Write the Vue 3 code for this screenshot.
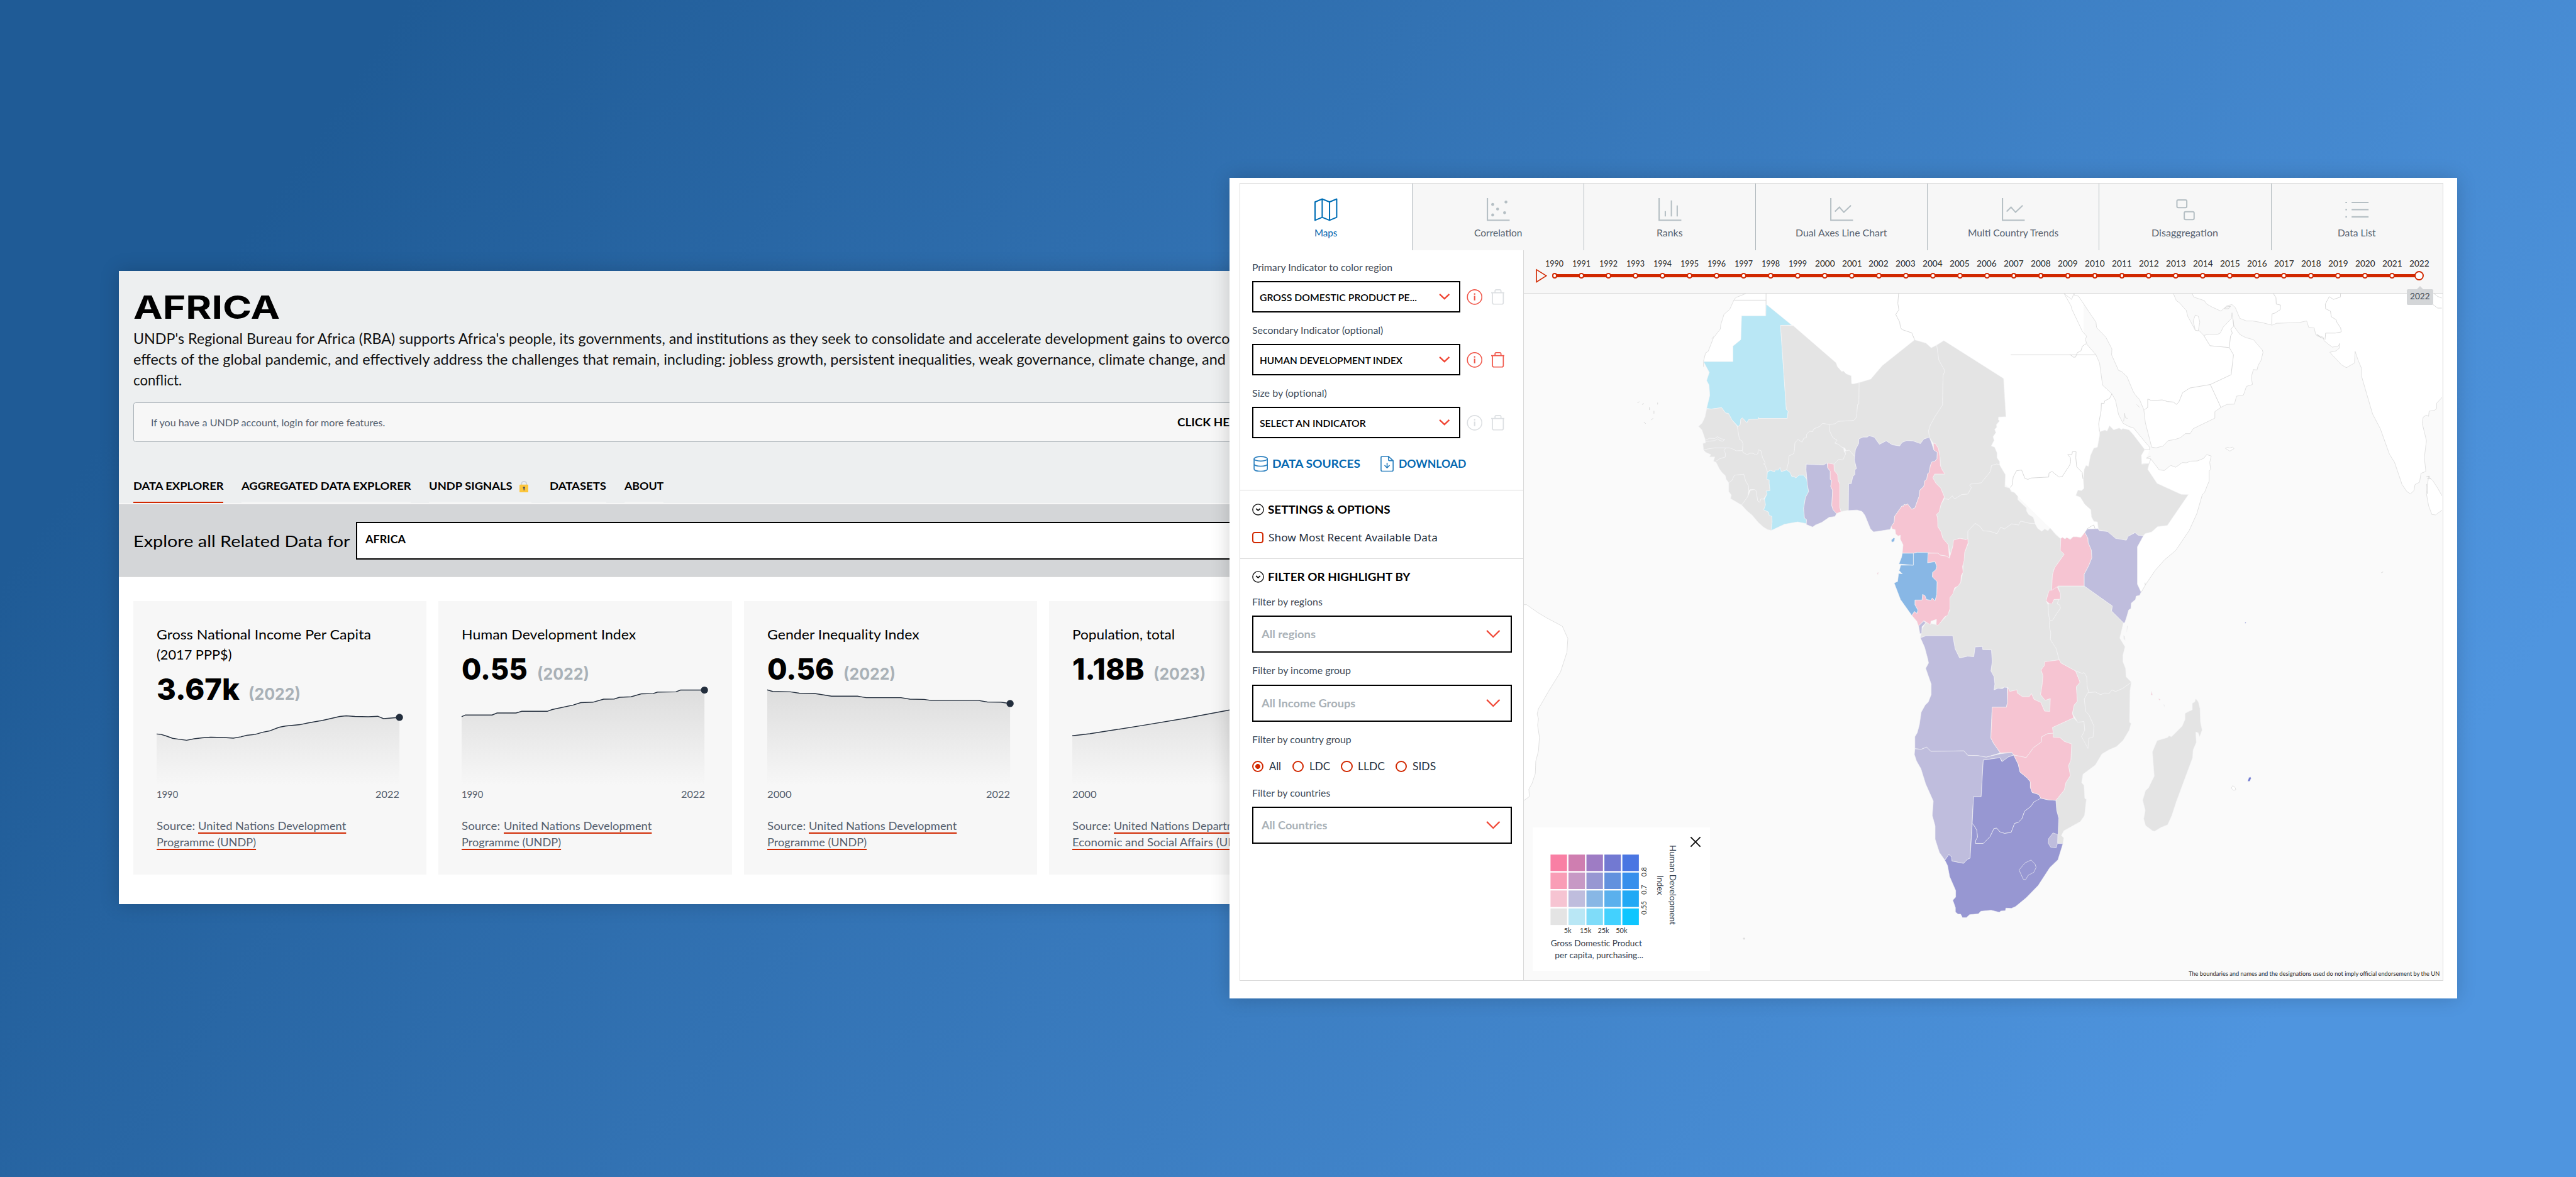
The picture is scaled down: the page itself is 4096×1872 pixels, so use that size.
<script setup>
// Width-fitting directive: scales a line of text horizontally to a given width
// and keeps the fitted width as its footprint in the layout.
const vFit = {
  mounted(el, { value }) {
    if (!value) return
    const scale = el.closest('.stage').getBoundingClientRect().width / 5622
    const natural = el.getBoundingClientRect().width / scale
    el.style.transform = `scaleX(${(value / natural).toFixed(4)})`
    el.style.marginRight = `${(value - natural).toFixed(2)}px`
  },
}

const navTabs = [
  { label: 'DATA EXPLORER', w: 197, active: true },
  { label: 'AGGREGATED DATA EXPLORER', w: 370 },
  { label: 'UNDP SIGNALS', w: 182, lock: true },
  { label: 'DATASETS', w: 123.5 },
  { label: 'ABOUT', w: 85.5 },
]

const undp = [['United Nations Development', 323], ['Programme (UNDP)', 217]]
const cards = [
  {
    title: [['Gross National Income Per Capita', 468], ['(2017 PPP$)', 164]],
    value: ['3.67k', 181], year: '(2022)', from: ['1990', 47], to: '2022', source: undp, span: [123, 762],
    pts: [[123, 728], [135, 730], [148, 737], [165, 748], [180, 752], [202, 757], [222, 750], [243, 746], [265, 743], [300, 744], [325, 747], [345, 741], [360, 734], [382, 730], [402, 720], [420, 714], [445, 697], [462, 691], [500, 685], [522, 677], [560, 665], [605, 647], [622, 644], [645, 647], [680, 648], [705, 646], [720, 657], [762, 651]],
  },
  {
    title: [['Human Development Index', 380.5]],
    value: ['0.55', 144], year: '(2022)', from: ['1990', 47], to: '2022', source: undp, span: [927, 1565],
    pts: [[927, 648], [937, 640], [1007, 640], [1020, 631], [1070, 631], [1085, 623], [1152, 623], [1165, 615], [1220, 594], [1240, 583], [1272, 581], [1300, 567], [1328, 566], [1342, 558], [1372, 556], [1400, 542], [1430, 541], [1442, 534], [1490, 533], [1502, 525], [1565, 525]],
  },
  {
    title: [['Gender Inequality Index', 332]],
    value: ['0.56', 146], year: '(2022)', from: ['2000', 53], to: '2022', source: undp, span: [225, 906],
    pts: [[225, 524], [240, 531], [290, 533], [315, 539], [355, 540], [405, 553], [478, 553], [502, 560], [600, 560], [625, 567], [665, 568], [685, 573], [818, 573], [842, 580], [880, 581], [906, 587]],
  },
  {
    title: [['Population, total', 224]],
    value: ['1.18B', 157], year: '(2023)', from: ['2000', 53], to: '2023',
    source: [['United Nations Departm', 267], ['Economic and Social Affairs (UN', 359]], span: [1081, 1762],
    pts: [[1081, 736], [1130, 727], [1200, 709], [1280, 688], [1400, 655], [1522, 617], [1762, 548]],
  },
].map((c) => {
  const line = c.pts.map(([x, y]) => [
    (((x - c.span[0]) / (c.span[1] - c.span[0])) * 530).toFixed(1),
    (200 + (y - 967) * 0.4719).toFixed(1),
  ])
  return { ...c, line: line.map((p) => p.join(',')).join(' '), end: line[line.length - 1] }
})

const views = [
  { label: 'Maps', w: 50, icon: 'map', active: true },
  { label: 'Correlation', w: 105, icon: 'scatter' },
  { label: 'Ranks', w: 57, icon: 'bars' },
  { label: 'Dual Axes Line Chart', w: 199.5, icon: 'line' },
  { label: 'Multi Country Trends', w: 198, icon: 'line' },
  { label: 'Disaggregation', w: 145.5, icon: 'boxes' },
  { label: 'Data List', w: 83, icon: 'list' },
]

const indicators = [
  { label: 'Primary Indicator to color region', lw: 306, text: 'GROSS DOMESTIC PRODUCT PE...', tw: 343, info: true, trash: false },
  { label: 'Secondary Indicator (optional)', lw: 286, text: 'HUMAN DEVELOPMENT INDEX', tw: 311.5, info: true, trash: true },
  { label: 'Size by (optional)', lw: 163, text: 'SELECT AN INDICATOR', tw: 231.5, info: false, trash: false },
]

const radios = [
  { label: 'All', w: 26, pad: 25 },
  { label: 'LDC', w: 45.5, pad: 24 },
  { label: 'LLDC', w: 59, pad: 23 },
  { label: 'SIDS', w: 51, pad: 0 },
]

const years = Array.from({ length: 33 }, (_, i) => 1990 + i)

const legend = [
  ['#f97fa4', '#cf7eb0', '#9e7cc4', '#7279d2', '#4a76e2'],
  ['#f99db6', '#c799c5', '#9797d2', '#6291de', '#378fec'],
  ['#f6c4d2', '#bfbddd', '#88b7e5', '#5ab0ed', '#21a9f5'],
  ['#e4e4e4', '#b9e7f5', '#7fdcf9', '#43d1fe', '#0ec6ff'],
]
const G = '#e4e4e4', P = '#f6c4d2', L = '#bfbddd', B = '#88b7e5', C = '#b9e7f5', V = '#9797d2'

const west = [
  [C, '360,88 458,178 415,179 437,538 444,547 441,577 332,577 331,572 330,580 294,582 287,596 270,575 264,580 262,603 254,612 230,583 217,556 206,554 191,531 152,537 134,534 146,478 143,434 134,415 144,380 122,334 234,334 234,268 264,240 267,138 359,138'],
  [G, '415,179 463,180 626,339 631,355 647,376 655,375 664,386 684,395 685,428 690,430 714,424 713,516 708,518 704,572 693,586 634,590 622,600 601,604 575,598 565,611 540,623 538,634 526,632 515,643 513,660 504,662 497,679 481,667 470,682 468,714 465,728 447,738 445,767 438,798 418,805 413,787 407,798 395,798 392,806 376,799 365,806 356,775 350,772 357,768 346,744 341,716 330,711 329,728 319,734 313,727 299,726 288,733 272,722 270,715 272,685 267,672 259,668 250,612 254,612 262,603 264,580 270,575 287,596 294,582 330,580 332,577 441,577 444,547 437,538'],
  [G, '925,241 968,255 988,275 1009,263 1017,327 1040,374 1033,394 1031,520 1002,570 985,605 978,630 981,658 960,665 947,685 918,673 895,672 877,680 868,695 840,690 817,673 791,688 772,658 752,651 745,657 728,657 713,665 712,685 700,710 697,740 676,713 664,716 660,704 648,700 635,688 621,683 630,670 614,660 602,632 600,604 622,600 634,590 693,586 704,572 708,518 713,516 714,424 758,409 802,351'],
  [G, '1036,244 1263,406 1272,570 1244,571 1243,583 1248,588 1236,603 1237,615 1229,624 1234,638 1223,655 1227,671 1216,695 1229,700 1238,724 1238,745 1248,762 1248,776 1237,772 1217,779 1214,803 1178,853 1138,858 1134,863 1141,873 1127,901 1104,903 1077,922 1068,909 1055,924 1037,921 1038,913 1024,875 1006,855 994,831 1001,815 1040,815 1030,798 1023,780 1021,740 1015,705 1003,684 996,684 981,658 978,630 985,605 1002,570 1031,520 1033,394 1040,374 1017,327 1009,263'],
  [G, '134,537 152,537 191,531 206,554 217,556 230,583 250,610 259,668 267,672 272,685 270,715 246,716 236,709 222,709 220,703 166,703 122,711 120,684 130,682 128,665 116,626 103,611 117,597 128,570'],
  [G, '122,711 166,703 220,703 236,709 246,716 270,715 272,722 288,733 299,726 313,727 319,734 329,728 330,711 341,716 346,744 357,768 350,772 356,775 365,806 363,838 372,840 372,855 375,886 360,888 364,900 350,923 341,921 336,936 328,930 322,887 315,881 300,881 294,887 293,866 282,844 275,816 240,820 230,843 218,852 208,837 205,822 192,808 182,792 170,765 160,760 165,742 145,742 150,732 130,722'],
  [G, '218,852 230,843 240,820 275,816 282,844 293,866 294,887 290,913 267,948 240,930 225,920 228,905 218,890'],
  [G, '267,948 290,913 300,885 315,881 322,887 328,930 336,936 341,921 350,923 354,923 358,947 351,968 370,978 372,992 382,996 383,1020 379,1057 365,1052 350,1042 330,1022 308,992 287,972'],
  [G, '438,798 445,767 447,738 465,728 468,714 470,682 481,667 497,679 504,662 513,660 515,643 526,632 538,634 540,623 565,611 575,598 601,604 602,632 614,660 630,670 621,683 635,688 648,700 655,705 657,720 663,728 652,755 636,752 618,775 594,768 590,772 578,776 513,773 512,795 515,838 503,820 485,820 473,832 465,825 459,828 450,807'],
  [C, '365,808 376,799 392,806 395,798 407,798 413,787 418,805 438,798 450,807 459,828 465,825 473,832 485,820 503,820 515,838 517,860 522,890 510,915 503,962 506,1003 514,1010 515,1028 480,1020 430,1030 379,1057 383,1020 382,996 372,992 370,978 351,968 358,947 354,923 364,900 360,888 375,886 372,855 372,840 363,838'],
  [L, '513,773 578,776 592,768 594,788 604,803 604,838 610,842 606,868 613,885 610,950 615,968 628,984 622,997 600,1000 572,1022 548,1033 537,1042 513,1031 514,1010 506,1003 503,962 510,915 522,890 517,860 512,795'],
  [G, '618,773 636,752 652,755 663,728 660,718 676,713 697,740 696,755 704,792 698,796 698,817 690,826 684,856 674,857 673,970 645,976 640,958 640,858 634,842 632,818 619,800'],
  [P, '594,768 618,773 619,800 632,818 634,842 640,858 640,958 645,976 628,984 615,968 610,950 613,885 606,868 610,842 604,838 604,803 594,788'],
  [L, '713,665 728,657 745,657 752,651 772,658 791,688 817,673 840,690 868,695 877,680 895,672 918,673 947,685 960,665 981,658 990,684 998,712 1011,722 1010,750 1000,762 991,763 985,778 980,808 974,815 971,838 963,845 960,868 945,884 942,910 926,960 914,966 897,942 893,948 885,945 882,954 877,951 849,996 847,1022 836,1040 832,1052 769,1063 757,1050 736,992 725,975 706,969 673,971 674,857 684,856 690,826 698,817 698,796 704,792 696,755 697,740 700,710 712,685'],
  [G, '1038,921 1055,924 1068,909 1077,922 1104,903 1127,901 1141,873 1134,863 1138,858 1178,853 1214,803 1217,779 1237,772 1248,776 1270,818 1268,870 1286,875 1292,890 1304,894 1317,910 1317,925 1350,960 1350,972 1358,988 1376,1000 1383,1027 1360,1025 1328,1016 1320,1033 1294,1028 1266,1050 1252,1042 1238,1070 1212,1060 1186,1058 1172,1038 1155,1026 1127,1060 1127,1096 1097,1090 1073,1098 1070,1125 1060,1160 1053,1118 1032,1090 1025,1062 1013,1040 1012,1003 1008,988 1018,978 1025,945'],
  [P, '996,684 1003,684 1015,705 1021,740 1023,780 1030,798 1040,815 1001,815 994,831 1006,855 1024,875 1038,913 1025,945 1018,978 1008,988 1012,1003 1013,1040 1025,1062 1032,1090 1053,1118 1057,1175 1045,1166 1022,1162 1014,1154 935,1150 920,1154 878,1153 881,1118 870,1093 871,1077 862,1080 853,1072 851,1053 840,1050 836,1040 847,1022 849,996 877,951 882,954 885,945 893,948 897,942 914,966 926,960 942,910 945,884 960,868 963,845 971,838 974,815 980,808 985,778 991,763 1000,762 1010,750 1011,722 998,712'],
  [P, '976,1154 1014,1154 1022,1162 1045,1166 1057,1175 1070,1125 1073,1098 1097,1090 1120,1096 1127,1092 1128,1110 1115,1150 1113,1185 1107,1210 1109,1235 1102,1250 1100,1278 1090,1294 1077,1302 1070,1328 1059,1344 1059,1392 1050,1420 1040,1425 1014,1463 1007,1460 1008,1437 987,1445 985,1460 968,1448 960,1443 940,1466 933,1445 914,1420 924,1403 934,1411 937,1397 926,1375 926,1354 953,1354 955,1330 964,1335 970,1352 987,1355 992,1345 1002,1358 1009,1330 1010,1275 992,1255 993,1236 1005,1225 1009,1210 1002,1190 974,1195'],
  [B, '920,1154 935,1150 976,1151 974,1195 1002,1190 1009,1210 1005,1225 993,1236 992,1255 1010,1275 1009,1330 1002,1358 992,1345 987,1355 970,1352 964,1335 955,1330 953,1354 926,1354 926,1375 937,1397 934,1411 924,1403 914,1420 871,1352 847,1281 860,1275 864,1240 878,1242 866,1228 872,1205 920,1205'],
  [B, '878,1154 920,1154 920,1205 865,1200 875,1172'],
  [B, '838,1107 836,1098 845,1088 850,1090 847,1104'],
  [P, '782,1238 788,1235 785,1247'],
]

const south = [
  [G, '430,50 430,18 458,-11 475,-1 489,17 515,19 541,28 555,3 569,10 597,-9 623,-5 631,-20 663,-12 686,-10 696,8 711,19 723,10 735,17 743,6 765,32 784,48 784,92 797,106 760,158 752,185 749,243 735,258 728,283 736,300 737,332 742,358 740,380 746,405 744,430 766,465 778,508 723,515 721,530 709,546 716,568 713,602 707,640 724,662 744,655 742,704 722,703 708,670 682,658 672,636 664,648 638,648 618,634 617,622 590,628 582,612 555,615 530,620 533,600 530,572 518,550 523,515 520,470 487,469 486,457 458,459 453,496 430,494 399,501 382,466 373,416 272,416 250,423 256,390 270,367 290,370 318,375 345,345 362,320 362,272 382,237 403,215 411,175 413,140 418,100 432,65'],
  [L, '243,379 263,360 270,367 256,382 255,408 248,408'],
  [L, '250,424 272,416 373,416 382,466 399,501 430,494 453,496 458,459 486,457 487,469 520,470 523,515 518,550 530,572 533,600 530,622 545,616 562,617 570,612 580,613 581,670 577,688 523,688 518,805 528,825 554,862 500,878 482,875 468,872 430,871 415,854 290,856 274,840 253,848 229,846 229,800 238,785 246,755 253,707 268,680 280,668 291,640 291,600 270,540 281,520 278,505 266,460'],
  [L, '229,846 253,848 274,840 290,856 415,854 430,871 468,872 500,878 554,865 598,860 605,870 585,877 562,895 552,880 489,889 481,1028 452,1028 439,1262 428,1267 414,1282 370,1273 369,1258 358,1248 343,1270 322,1240 306,1190 306,1140 295,1100 299,1045 270,980 252,922 235,892 227,868'],
  [V, '489,889 552,880 560,895 585,877 605,870 622,905 629,935 656,957 668,972 668,993 675,1012 700,1020 708,1034 700,1044 682,1048 670,1065 646,1084 636,1112 622,1126 608,1130 595,1164 570,1168 552,1162 540,1148 530,1149 515,1180 489,1206 459,1206 460,1195 467,1182 464,1155 455,1140 447,1130 452,1028 481,1028'],
  [G, '752,765 833,728 848,745 872,742 875,775 863,800 887,832 890,806 906,802 910,760 891,718 878,703 873,657 886,633 915,630 935,640 950,634 968,635 978,622 992,628 1018,617 1052,593 1047,625 1045,745 1051,750 1044,775 1020,815 995,838 967,850 940,866 915,908 868,943 863,975 872,985 875,1035 881,1038 874,1100 858,1123 795,1158 786,1176 795,1185 792,1207 771,1206 776,1110 768,1080 765,1042 797,1003 803,975 820,948 813,910 822,890 825,828 797,818 780,803 755,802'],
  [V, '447,1130 455,1140 464,1155 467,1182 460,1195 459,1206 489,1206 515,1180 530,1149 540,1148 552,1162 570,1168 595,1164 608,1130 622,1126 636,1112 646,1084 670,1065 682,1048 708,1034 735,1040 765,1042 768,1080 776,1110 772,1206 792,1207 773,1268 742,1298 698,1366 652,1413 612,1446 596,1453 575,1452 573,1462 556,1463 550,1468 519,1460 480,1464 470,1474 437,1477 425,1488 410,1488 403,1475 393,1475 383,1467 383,1450 373,1422 384,1410 384,1385 361,1332 353,1290 343,1270 358,1248 369,1258 370,1273 414,1282 428,1267 439,1262'],
  [V, '671,1269 648,1280 625,1307 641,1342 650,1344 660,1327 681,1316 690,1297 686,1285'],
  [L, '754,1166 772,1172 771,1206 766,1223 745,1220 736,1205 738,1187'],
  [P, '778,508 785,520 800,528 840,550 857,593 843,610 847,665 835,680 828,712 833,728 752,765 755,787 735,788 712,800 710,820 680,842 652,880 640,877 605,870 598,860 554,862 528,825 518,805 523,688 577,688 581,670 582,612 590,628 617,622 618,634 638,648 664,648 672,636 682,658 708,670 722,703 742,704 744,655 724,662 707,640 713,602 716,568 709,546 721,530 723,515'],
  [P, '755,787 755,802 780,803 797,818 825,828 822,890 813,910 820,948 803,975 797,1003 765,1042 735,1040 708,1034 700,1020 675,1012 668,993 668,972 656,957 629,935 622,905 605,870 640,877 652,880 680,842 710,820 712,800 735,788'],
  [G, '774,227 873,227 980,303 977,322 1022,367 1008,425 1028,458 1020,490 1020,515 1030,540 1032,572 1052,593 1018,617 992,628 978,622 968,635 950,634 935,640 915,630 890,632 884,610 882,572 872,556 866,560 840,550 800,528 785,520 778,508 766,465 744,430 746,405 740,380 742,358 752,358 766,335 782,312 780,300 770,295 776,278 782,275 782,255 774,232'],
  [G, '840,550 866,560 872,556 882,572 884,610 890,632 886,633 873,657 878,703 891,718 910,760 906,802 890,806 887,845 863,800 875,775 872,742 848,745 828,712 835,680 847,665 843,610 857,593'],
  [G, '736,295 750,293 758,278 776,278 770,295 780,300 782,312 766,335 752,358 742,358 737,332'],
  [P, '784,46 790,42 800,48 806,42 820,50 830,40 845,40 860,42 875,23 887,45 888,62 900,90 902,120 890,150 873,182 873,227 774,227 765,235 754,245 749,243 752,185 760,158 797,106 782,92'],
  [P, '770,230 782,255 782,277 758,278 750,295 740,294 728,283 735,258 740,243 750,243'],
  [L, '875,23 884,10 925,9 930,16 962,20 992,46 1033,53 1040,38 1066,24 1078,34 1098,36 1075,78 1075,220 1089,250 1084,262 1070,266 1068,278 1052,292 1050,313 1042,318 1035,342 1027,367 1022,367 977,322 980,303 873,227 873,182 890,150 902,120 900,90 888,62 887,45'],
  [G, '1297,655 1307,668 1313,693 1315,745 1321,775 1312,800 1306,785 1297,782 1299,822 1287,850 1285,880 1222,1050 1206,1100 1190,1135 1165,1145 1140,1160 1133,1158 1106,1138 1099,1112 1105,1080 1095,1042 1106,1005 1117,995 1139,950 1132,858 1150,815 1190,803 1195,797 1205,800 1245,760 1256,735 1256,712 1268,705 1284,698 1284,673 1293,668'],
  [G, '1022,415 1027,418 1028,434 1023,428'],
  [G, '1036,378 1039,380 1034,402'],
  [P, '1128,626 1133,641 1127,642'],
  [P, '1154,655 1162,658 1160,663'],
  [G, '1175,677 1179,680 1177,687'],
  ['#6f79d2', '1499,955 1506,953 1507,960 1502,970 1494,970'],
  ['#6f79d2', '1484,364 1489,367 1485,370'],
]
const ethiopia = '357,634 375,627 382,631 390,608 404,626 422,618 430,625 434,620 455,626 470,648 507,710 496,735 497,773 522,770 517,795 548,855 628,902 652,903 582,1035 550,1040 530,1063 508,1070 503,1079 488,1078 473,1066 455,1080 446,1099 408,1092 382,1060 357,1055 353,1050 350,1020 338,1018 330,998 328,968 308,945 293,914 278,907 285,884 297,886 305,877 303,836 306,795 312,778 320,782 327,735 338,704 350,700 357,650'
</script>

<template>
  <main class="stage">
    <!-- Region overview window -->
    <section class="window overview">
      <header class="intro">
        <h1><span v-fit="320" class="fit">AFRICA</span></h1>
        <p class="lead">
          <span v-fit="2393" class="fit">UNDP's Regional Bureau for Africa (RBA) supports Africa's people, its governments, and institutions as they seek to consolidate and accelerate development gains to overco</span>
          <span v-fit="2384" class="fit">effects of the global pandemic, and effectively address the challenges that remain, including: jobless growth, persistent inequalities, weak governance, climate change, and</span>
          <span v-fit="106" class="fit">conflict.</span>
        </p>
        <div class="login">
          <span v-fit="511" class="fit">If you have a UNDP account, login for more features.</span>
          <b v-fit="114" class="fit">CLICK HE</b>
        </div>
        <nav class="nav">
          <a v-for="t in navTabs" :key="t.label" :class="{ active: t.active }">
            <span v-fit="t.w" class="fit">{{ t.label }}</span>
            <svg v-if="t.lock" class="lock" width="20" height="25" viewBox="0 0 20 25">
              <path d="M4.5 9V6.5a5.5 5.5 0 0 1 11 0V9" fill="none" stroke="#ccd0d4" stroke-width="2.4" />
              <rect y="8" width="20" height="17" rx="2" fill="#fcc63d" />
              <circle cx="10" cy="14.5" r="2.3" fill="#4a4e5c" /><rect x="9" y="15" width="2" height="5.5" fill="#4a4e5c" />
            </svg>
          </a>
        </nav>
      </header>
      <div class="explore">
        <span v-fit="473" class="fit">Explore all Related Data for</span>
        <div class="explore-select"><b v-fit="88" class="fit">AFRICA</b></div>
      </div>
      <div class="cards">
        <article v-for="(c, i) in cards" :key="i" class="card">
          <h2><span v-for="t in c.title" :key="t[0]" v-fit="t[1]" class="fit">{{ t[0] }}</span></h2>
          <div class="value">
            <b v-fit="c.value[1]" class="fit">{{ c.value[0] }}</b>
            <i v-fit="114" class="fit">{{ c.year }}</i>
          </div>
          <svg class="spark" width="530" height="160" viewBox="0 40 530 160">
            <defs>
              <linearGradient :id="'fade' + i" x1="0" y1="0" x2="0" y2="200" gradientUnits="userSpaceOnUse">
                <stop offset="0" stop-color="#dedede" /><stop offset="1" stop-color="#f7f7f7" />
              </linearGradient>
            </defs>
            <polygon :points="`0,200 ${c.line} 530,200`" :fill="`url(#fade${i})`" />
            <polyline :points="c.line" fill="none" stroke="#232e3d" stroke-width="2" />
            <circle :cx="c.end[0]" :cy="c.end[1]" r="7.8" fill="#232e3d" />
          </svg>
          <div class="range">
            <span v-fit="c.from[1]" class="fit">{{ c.from[0] }}</span><span v-fit="52" class="fit">{{ c.to }}</span>
          </div>
          <div class="source">
            <div><span v-fit="84" class="fit">Source:</span><a v-fit="c.source[0][1]" class="fit">{{ c.source[0][0] }}</a></div>
            <div><a v-fit="c.source[1][1]" class="fit">{{ c.source[1][0] }}</a></div>
          </div>
        </article>
      </div>
    </section>

    <!-- Map explorer window -->
    <section class="window explorer">
      <div class="frame">
        <nav class="views">
          <a v-for="v in views" :key="v.label" :class="{ active: v.active }">
            <svg width="50" height="50" viewBox="0 0 50 50" fill="none" stroke="currentColor" stroke-width="2.8">
              <path v-if="v.icon === 'map'" d="M1.4 8.5 17 2 33 8.5 48.6 2V42L33 48.6 17 42 1.4 48.6ZM17 2V42M33 8.5V48.6" stroke-width="2.8" stroke-linejoin="round" />
              <path v-if="['scatter', 'bars', 'line'].includes(v.icon)" d="M1.5 0V48.4H50" />
              <g v-if="v.icon === 'scatter'" fill="currentColor" stroke="none">
                <circle cx="13" cy="14" r="3.2" /><circle cx="42" cy="8.7" r="3.2" /><circle cx="23.7" cy="24" r="3.2" /><circle cx="39" cy="32" r="3.2" /><circle cx="13" cy="37" r="3.2" />
              </g>
              <path v-if="v.icon === 'bars'" d="M15 28.5V40M28.3 5V40M41 16V40" />
              <path v-if="v.icon === 'line'" d="M10.5 29.5 20.2 20 30 31 45.5 16" />
              <g v-if="v.icon === 'boxes'"><rect x="7.5" y="4" width="21.5" height="17" rx="3" /><rect x="23.5" y="30" width="21.5" height="17" rx="3" /></g>
              <path v-if="v.icon === 'list'" d="M.5 9.5H4M14 9.5H51M.5 25.2H4M14 25.2H51M.5 41H4M14 41H51" />
            </svg>
            <span v-fit="v.w" class="fit">{{ v.label }}</span>
          </a>
        </nav>
        <div class="body">
          <aside class="side">
            <div class="group indicators">
              <div v-for="d in indicators" :key="d.label" class="indicator">
                <label><span v-fit="d.lw" class="fit">{{ d.label }}</span></label>
                <div class="row">
                  <div class="select small">
                    <b v-fit="d.tw" class="fit">{{ d.text }}</b>
                    <svg width="24" height="14" viewBox="0 0 24 14"><path d="M1.5 1.2 12 11.2 22.5 1.2" fill="none" stroke="#f04432" stroke-width="3.2" /></svg>
                  </div>
                  <svg class="info" :class="{ off: !d.info }" width="35" height="34" viewBox="0 0 35 34" fill="none" stroke="currentColor" stroke-width="2.2">
                    <circle cx="17.5" cy="17" r="15.8" /><path d="M17.5 14.5V24.5M17.5 8.8V12" stroke-width="3" />
                  </svg>
                  <svg class="trash" :class="{ off: !d.trash }" width="30" height="34" viewBox="0 0 30 34" fill="none" stroke="currentColor" stroke-width="2.3">
                    <path d="M0 7.8H30M3 8V29.5Q3 32.6 6 32.6H23.5Q26.6 32.6 26.6 29.5V8M8.5 7.5V4Q8.5 1.3 11 1.3H19Q21.5 1.3 21.5 4V7.5" />
                  </svg>
                </div>
              </div>
              <div class="links">
                <svg width="32" height="35" viewBox="0 0 32 35" fill="none" stroke="#2a7fbe" stroke-width="2.2">
                  <ellipse cx="16" cy="6.5" rx="14.5" ry="5" /><path d="M1.5 6.5V28.5C1.5 35.5 30.5 35.5 30.5 28.5V6.5M1.5 17.5C1.5 24.5 30.5 24.5 30.5 17.5" />
                </svg>
                <b v-fit="192" class="fit">DATA SOURCES</b>
                <svg class="file" width="29" height="35" viewBox="0 0 29 35" fill="none" stroke="#2a7fbe" stroke-width="2.2">
                  <path d="M17.5 1.3H4Q1.3 1.3 1.3 4V31Q1.3 33.7 4 33.7H25Q27.7 33.7 27.7 31V10.5L17.5 1.3V8.5Q17.5 10.5 19.5 10.5H27.7M14.5 15V26M9 20.5 14.5 26.3 20 20.5" />
                </svg>
                <b v-fit="147.5" class="fit">DOWNLOAD</b>
              </div>
            </div>
            <div class="group settings">
              <h3>
                <svg width="26" height="26" viewBox="0 0 26 26" fill="none" stroke="#111" stroke-width="2"><circle cx="13" cy="13" r="11.8" /><path d="M8.5 11 13 15 17.5 11" stroke-width="2.4" /></svg>
                <span v-fit="267" class="fit">SETTINGS &amp; OPTIONS</span>
              </h3>
              <div class="check"><i class="box"></i><span v-fit="369" class="fit recent">Show Most Recent Available Data</span></div>
            </div>
            <div class="group filters">
              <h3>
                <svg width="26" height="26" viewBox="0 0 26 26" fill="none" stroke="#111" stroke-width="2"><circle cx="13" cy="13" r="11.8" /><path d="M8.5 11 13 15 17.5 11" stroke-width="2.4" /></svg>
                <span v-fit="311" class="fit">FILTER OR HIGHLIGHT BY</span>
              </h3>
              <label><span v-fit="153.5" class="fit">Filter by regions</span></label>
              <div class="select big"><b v-fit="118" class="fit">All regions</b><svg width="31" height="18" viewBox="0 0 31 18"><path d="M1.5 1.2 15.5 15 29.5 1.2" fill="none" stroke="#f04432" stroke-width="3" /></svg></div>
              <label><span v-fit="215.5" class="fit">Filter by income group</span></label>
              <div class="select big"><b v-fit="205" class="fit">All Income Groups</b><svg width="31" height="18" viewBox="0 0 31 18"><path d="M1.5 1.2 15.5 15 29.5 1.2" fill="none" stroke="#f04432" stroke-width="3" /></svg></div>
              <label><span v-fit="216.5" class="fit">Filter by country group</span></label>
              <div class="radios">
                <div v-for="(r, i) in radios" :key="r.label" :style="{ marginRight: r.pad + 'px' }">
                  <i class="radio" :class="{ on: i === 0 }"></i><span v-fit="r.w" class="fit">{{ r.label }}</span>
                </div>
              </div>
              <label><span v-fit="170.5" class="fit">Filter by countries</span></label>
              <div class="select big last"><b v-fit="143.5" class="fit">All Countries</b><svg width="31" height="18" viewBox="0 0 31 18"><path d="M1.5 1.2 15.5 15 29.5 1.2" fill="none" stroke="#f04432" stroke-width="3" /></svg></div>
            </div>
          </aside>
          <div class="canvas">
            <div class="timeline">
              <svg class="play" width="25" height="32" viewBox="0 0 25 32"><path d="M1.5 2.5V29.5L23 16Z" fill="none" stroke="#d12800" stroke-width="2.2" /></svg>
              <ol>
                <li v-for="y in years" :key="y"><span v-fit="y < 2000 ? 40 : 43.5" class="fit">{{ y }}</span><i></i></li>
              </ol>
              <div class="tip"><span v-fit="43.5" class="fit">2022</span></div>
            </div>
            <svg class="map" width="2003" height="1497" viewBox="3328 642 2003 1497">
              <g class="land">
                <g transform="translate(3650 620) scale(.574 .5102)">
                  <path class="plain" d="M285,40 245,60 238,70 222,110 200,132 188,175 186,195 160,232 140,290 130,297 122,333 234,333 700,430 1270,570 1280,870 1480,1090 1568,1085V40Z" />
                  <path class="edge" d="M285,42 245,60 238,70 222,110 200,132 188,175 186,195 160,232 140,290 130,297 122,333V356M154,236 162,226" />
                  <path class="line" d="M238,71H360M360,40V138M864,40 861,85 865,113 853,132 868,165 871,188 877,197 914,211 925,241M1271,40 1292,388H1265V408M1288,305H1568M1460,305 1467,296" />
                </g>
                <g transform="translate(4350 620) scale(.6569 .5102)">
                  <path class="plain" d="M0,40H238L262,95 265,110 300,205 314,225 310,258 345,305 357,340 367,435 398,472 410,500 420,560 435,598 455,612 470,618 500,665 523,700 523,712 512,747 527,750 555,797 572,800 593,778 610,786 632,766 645,767 660,760 682,759 703,748 713,732 728,738 723,765 726,795 721,802 721,845 706,893 698,905 680,985 655,1056 610,1142 573,1182 542,1227 510,1288 495,1322 482,1290 350,1060 230,1090 60,880 0,800Z" />
                  <path class="edge" d="M238,40 262,95 265,110 300,205 314,225 310,240 315,260 345,305 357,340 367,435 398,472 410,500 420,560 435,598 455,612 470,618 500,665 523,700 523,712 507,710M497,773 522,770 527,750 512,747 527,738M527,750 555,797 572,800 593,778 610,786 632,766 645,767 660,760 682,759 703,748 713,732 728,738 723,765 726,795 721,802 721,845 706,893 698,905 680,985 655,1056 610,1142 573,1182 542,1227 510,1288 495,1322M238,42 264,68 272,42M437,590 440,555 443,575 450,577M480,517 490,530" />
                  <path class="line" d="M258,303 270,315 277,315 283,296 295,288 300,268 312,258M62,305H345M398,472 390,492 374,502 372,513 363,512 362,545 354,600 357,634M60,873 67,862 70,828 81,801 98,798 109,834 119,838 130,832 188,828 189,811 199,804 222,828 233,826 258,776 261,763 260,745 251,732 265,732 267,719 279,720 278,745 281,784 299,808 302,836M316,1049 330,1038 338,1033 342,1049" />
                  <path class="coast" d="M273,30V50L287,54 330,137 345,165 347,188 378,230 398,280 397,305 420,372 430,376 448,398 468,460 475,475 490,497 504,540 509,595 530,700 545,703 568,695 585,672 605,668 625,660 642,642 658,642 668,621 740,576 740,548 760,530 780,517 805,516 812,482 835,477 845,440 865,432 861,400 868,368 880,370 884,350 893,330 900,295 898,285 868,240 842,231 823,218 803,182 797,125 795,150 768,186 758,212 748,218 720,217 703,222 688,202 675,200 650,140 645,115 622,82 612,73 598,30Z" />
                  <path class="line" d="M506,540 517,530V494L530,501 565,498 583,505 602,507 612,517 620,508 633,467 657,447 725,432 794,390 802,305 788,274 724,266 703,222M725,432 760,530M788,274 792,225 798,212 793,195 803,182 800,150" />
                  <path class="coast" d="M675,135 685,140 690,165 685,202 675,200 668,160Z" />
                  <path class="coast" d="M660,30 670,58 705,73 713,88 730,100 760,118 780,95 797,90 808,103 823,149 845,160 865,160 900,168 930,178 945,170 990,168 1020,167 1045,160 1052,188 1070,190 1075,218 1100,230 1103,245 1130,272 1150,268 1155,256 1155,275 1143,288 1122,294 1160,347 1177,360 1204,340 1206,290 1215,325 1227,362 1227,395 1264,558 1290,622 1320,730 1337,765 1362,860 1378,890 1390,900 1402,885 1405,860 1420,850 1425,812 1441,804 1436,745 1443,672 1429,598 1432,572 1442,563 1450,568 1452,546 1470,542 1477,535 1477,512 1500,480V30Z" />
                  <path class="line" d="M933,40 943,60 944,88 958,92 957,112 940,126 930,130 929,175M1158,40 1157,58 1134,68 1120,56 1107,88 1108,108 1124,118 1127,142 1143,155 1145,165 1158,190 1160,207 1140,212 1108,212 1106,240M1465,40 1480,55 1494,62M1465,90 1480,105H1494M1078,222 1102,236M1080,216 1092,232M772,108 778,100 792,98 785,108Z" />
                  <path class="coast" d="M1450,825 1465,845 1480,875 1500,920V965L1473,990 1461,988 1450,950 1443,900ZM775,705 782,701 790,704 798,700 804,706 790,717Z" />
                  <path class="line" d="M1443,826 1452,824 1456,836 1446,834M1444,858 1446,900M1293,1237 1299,1234M508,1280 509,1290" />
                </g>
                <path class="coast" d="M3300,1321H3334L3358,1338 3378,1350 3412,1368 3424,1395 3422,1425 3408,1468 3382,1510 3366,1538 3360,1548 3357,1560 3360,1570 3358,1584 3362,1610 3360,1640 3354,1663 3353,1690 3346,1711 3339,1724 3340,1740 3326,1750H3300Z" />
                <path class="line" d="M3576,880 3580,878M3586,884 3590,882M3602,890V896M3612,898V904M3620,880V884M3590,922 3594,926M3606,918 3610,914M3806,2050H3811M3808.500,2047.500V2052.500" />
                <g transform="translate(4050 1150) scale(.574)"><path class="coast" d="M1438,986 1447,994 1449,1002 1441,1004 1432,996Z" /></g>
              </g>
              <g transform="translate(3650 620) scale(.574 .5102)">
                <polygon v-for="(s, i) in west.slice(0, 14)" :key="i" class="country" :fill="s[0]" :points="s[1]" />
                <path class="inner" d="M130,670 145,662 165,663 175,655 188,664 203,667 195,675 185,672 175,664 165,672 130,676M170,760 183,750 205,742V725L200,715 206,704" />
              </g>
              <g transform="translate(4050 1150) scale(.574)"><polygon class="country" :fill="south[0][0]" :points="south[0][1]" /></g>
              <g transform="translate(3650 620) scale(.574 .5102)">
                <polygon v-for="(s, i) in west.slice(14)" :key="i" class="country" :fill="s[0]" :points="s[1]" />
              </g>
              <g transform="translate(4350 620) scale(.6569 .5102)"><polygon class="country" :fill="G" :points="ethiopia" /></g>
              <g transform="translate(4050 1150) scale(.574)">
                <polygon v-for="(s, i) in south.slice(1)" :key="i" class="country" :fill="s[0]" :points="s[1]" />
              </g>
            </svg>
            <svg class="legend" width="387" height="313" viewBox="3346 1807 387 313">
              <g v-for="(row, r) in legend" :key="r">
                <rect v-for="(c, i) in row" :key="i" :x="3385 + i * 39.2" :y="1866.3 + r * 39.2" width="36" height="36" :fill="c" />
              </g>
              <path d="M3691,1828 3712,1849M3712,1828 3691,1849" stroke="#111" stroke-width="2.6" />
              <g font-size="15" text-anchor="middle" fill="#333">
                <text x="3422.5" y="2037.3">5k</text><text x="3461.5" y="2037.3">15k</text><text x="3500.5" y="2037.3">25k</text><text x="3540" y="2037.3">50k</text>
                <text transform="translate(3595 1904) rotate(-90)">0.8</text><text transform="translate(3595 1943) rotate(-90)">0.7</text><text transform="translate(3595 1982.5) rotate(-90)">0.55</text>
              </g>
              <g font-size="17.4" fill="#323d4c">
                <text x="3385.5" y="2066.5" textLength="199" lengthAdjust="spacingAndGlyphs">Gross Domestic Product</text>
                <text x="3394.5" y="2093" textLength="193" lengthAdjust="spacingAndGlyphs">per capita, purchasing...</text>
                <text transform="translate(3645 1845.5) rotate(90)" textLength="174" lengthAdjust="spacingAndGlyphs">Human Development</text>
                <text transform="translate(3618 1911.5) rotate(90)" textLength="43" lengthAdjust="spacingAndGlyphs">Index</text>
              </g>
            </svg>
            <p class="note"><span v-fit="548" class="fit">The boundaries and names and the designations used do not imply official endorsement by the UN</span></p>
          </div>
        </div>
      </div>
    </section>
  </main>
</template>

<style>
html,
body {
  margin: 0;
  overflow: hidden;
}
</style>

<style scoped>
.stage {
  zoom: 0.72857;
  position: relative;
  width: 5622px;
  height: 2569.5px;
  overflow: hidden;
  font-family: Lato, 'Open Sans', sans-serif;
  color: #000;
  background: linear-gradient(125deg, #1f5b96 0%, #1f5b96 12%, #4f95df 88%, #4f95df 100%);
}
.stage * { box-sizing: border-box; }
.fit { display: inline-block; white-space: pre; flex: none; transform-origin: 0 50%; }
h1, h2, h3, p, ol { margin: 0; padding: 0; font-weight: 400; }
i { font-style: normal; }
.window { position: absolute; background: #fff; box-shadow: 0 0 40px rgba(0, 0, 0, 0.18); }

.overview { left: 260px; top: 592px; width: 2700px; height: 1382px; overflow: hidden; }
.intro { height: 508.5px; padding: 36px 0 0 30.5px; background: #edeff0; border-bottom: 3px solid #f7f7f7; }
h1 { height: 80px; font-family: Inter, Lato, sans-serif; font-size: 70px; line-height: 84px; font-weight: 700; }
.lead { margin-top: 10.5px; font-size: 31px; line-height: 45px; color: #111; display: flex; flex-direction: column; align-items: flex-start; }
.login { display: flex; align-items: center; gap: 1728px; margin-top: 25.5px; height: 86px; padding-left: 38px; border: 2px solid #a9b1b7; border-radius: 5px; background: #f7f7f7; font-size: 21px; color: #55606e; }
.login b { font-size: 24px; color: #000; }
.nav { display: flex; gap: 39.5px; margin-top: 76px; }
.nav a { display: flex; height: 57px; line-height: 40px; font-size: 24.3px; font-weight: 700; border-bottom: 4px solid #f4f5f5; }
.nav a.active { border-color: #d12800; }
.lock { margin: 9px 7px 0 15px; }
.explore { display: flex; align-items: center; height: 160px; padding-left: 30.5px; background: #d4d6d8; border-bottom: 1.5px solid #dedede; font-size: 35.5px; }
.explore-select { display: flex; align-items: center; flex: 1; height: 82.5px; margin-left: 14px; padding: 0 0 6px 17px; border: 3.5px solid #000; background: #fff; font-size: 24px; }
.cards { display: flex; gap: 26px; padding: 51px 0 0 30.5px; }
.card { display: flex; flex-direction: column; flex: none; width: 640.3px; height: 598px; padding: 51px 0 53.5px 51px; background: #f7f7f7; }
h2 { display: flex; flex-direction: column; align-items: flex-start; font-size: 30.3px; line-height: 44px; }
.value { display: flex; align-items: baseline; margin-top: 10px; height: 86px; line-height: 88px; font-family: Inter, Lato, sans-serif; font-size: 64px; }
.value b { font-weight: 800; }
.value i { margin-left: 20px; font-size: 36px; font-weight: 700; color: #a9b1b7; }
.spark { position: relative; display: block; flex: none; margin-top: auto; overflow: visible; }
.range { display: flex; justify-content: space-between; width: 530px; margin-top: 5px; height: 26px; font-size: 21px; line-height: 26px; color: #55606e; }
.source { margin-top: 39.5px; font-size: 24.5px; line-height: 35px; color: #55606e; white-space: nowrap; }
.source div { display: flex; gap: 7px; height: 35px; }
.source a { text-decoration: underline #d12800 3px; text-underline-offset: 5.5px; text-decoration-skip-ink: none; }

.explorer { left: 2684px; top: 388px; width: 2678px; height: 1792px; padding: 12px 30px 39px 22px; }
.frame { display: flex; flex-direction: column; height: 1741px; border: 2px solid #dadada; }
.views { display: flex; height: 144.5px; }
.views a { display: flex; flex-direction: column; align-items: center; flex: 1 0 0; padding-top: 31px; background: #f7f7f7; color: #b5bfc4; }
.views a + a { border-left: 2px solid #b0b8bd; }
.views svg { flex: none; overflow: visible; }
.views span { margin-top: 12.5px; font-size: 20.8px; line-height: 26px; color: #55606e; }
.views .active { background: #fff; color: #006eb5; }
.views .active span { color: #0468b1; }
.body { display: flex; flex: 1; }
.side { width: 619px; border-right: 2px solid #dadada; background: #fff; }
.group { padding-left: 25px; border-bottom: 2px solid #dadada; }
label { display: block; height: 30px; font-size: 21px; line-height: 30px; color: #404a57; }
.indicators { height: 525px; padding-top: 24px; }
.indicator { margin-bottom: 24.8px; }
.row { display: flex; align-items: center; margin-top: 14px; }
.select { display: flex; align-items: center; justify-content: space-between; border: 3px solid #000; background: #fff; }
.select b { font-weight: 600; }
.small { width: 454.5px; height: 68.5px; padding: 0 20px 0 13.5px; font-size: 22px; }
.info { margin-left: 14.5px; color: #f0574a; }
.trash { margin-left: 17.5px; color: #f0574a; }
.off { color: #dcdfe2; }
.links { display: flex; align-items: center; height: 35px; margin-top: 38px; padding-left: 3px; font-size: 23.5px; color: #0468b1; }
.links b { margin-left: 10px; }
.links .file { margin-left: 44px; }
h3 { display: flex; align-items: center; gap: 8px; height: 30px; padding-left: 1px; font-size: 23.5px; font-weight: 700; }
.settings { height: 149px; padding-top: 26.5px; }
.check { display: flex; align-items: center; gap: 11.5px; height: 30px; margin-top: 31px; font-size: 22.8px; color: #232e3d; }
.recent { font-family: 'Noto Sans', 'Open Sans', sans-serif; }
.box { width: 25px; height: 25px; border: 3.5px solid #d12800; border-radius: 6px; }
.filters { border: 0; padding-top: 25px; }
.filters label { margin-top: 24.5px; }
.big { width: 567.5px; height: 80.8px; margin-top: 15px; padding: 0 22.5px 0 18px; font-size: 22.3px; color: #a9b1b7; }
.big b { font-weight: 700; }
.big.last { margin-top: 13.5px; }
.radios { display: flex; height: 30px; margin: 28px 0 30px; font-size: 23.8px; color: #232e3d; }
.radios > div { display: flex; align-items: center; }
.radio { flex: none; width: 25px; height: 25px; margin-right: 12px; border: 3px solid #d12800; border-radius: 50%; }
.radio.on { background: radial-gradient(circle, #d12800 5px, transparent 5.7px); }

.canvas { position: relative; flex: 1; background: #fafafa; }
.timeline { position: relative; z-index: 1; display: flex; height: 95.5px; padding: 20px 0 0 25px; background: #f7f7f7; border-bottom: 2px solid #dadada; }
.play { flex: none; margin: 20px 0 0; }
ol { display: flex; margin-left: -13px; list-style: none; }
li { position: relative; display: flex; flex-direction: column; align-items: center; flex: none; width: 58.97px; font-size: 17.7px; line-height: 20px; color: #222; }
li::before { content: ''; position: absolute; left: 0; right: 0; top: 33.3px; height: 6.3px; background: #d12800; }
li:first-child::before { left: 50%; }
li:last-child::before { right: 50%; }
li i { position: relative; width: 12px; height: 12px; margin-top: 10.5px; border: 2.8px solid #d12800; border-radius: 50%; background: #fff; }
li:last-child i { width: 21px; height: 21px; margin-top: 6px; border-width: 3px; }
.tip { position: absolute; left: 1926px; top: 86px; display: flex; justify-content: center; width: 58px; height: 34px; border-radius: 3px; background: #d4d6d8; font-size: 17.2px; line-height: 32px; color: #404a57; }
.tip::before { content: ''; position: absolute; left: 22px; top: -7px; border: 7px solid transparent; border-top: 0; border-bottom-color: #d4d6d8; }
.map { position: absolute; left: 0; top: 95.5px; }
.map path, .map polygon { vector-effect: non-scaling-stroke; stroke-linejoin: round; }
.plain { fill: #fff; }
.coast { fill: #fff; stroke: #dedede; stroke-width: 1.3px; }
.edge { fill: none; stroke: #dedede; stroke-width: 1.3px; }
.line { fill: none; stroke: #d6d6d6; stroke-width: 1.3px; }
.country { stroke: #f4f4f6; stroke-opacity: 0.75; stroke-width: 1.2px; }
.inner { fill: none; stroke: #f4f4f6; stroke-width: 1.2px; }
.legend { position: absolute; left: 18px; top: 1260px; background: #fff; }
.note { position: absolute; right: 6px; bottom: 6px; font-size: 12px; line-height: 16px; color: #222; }
</style>
